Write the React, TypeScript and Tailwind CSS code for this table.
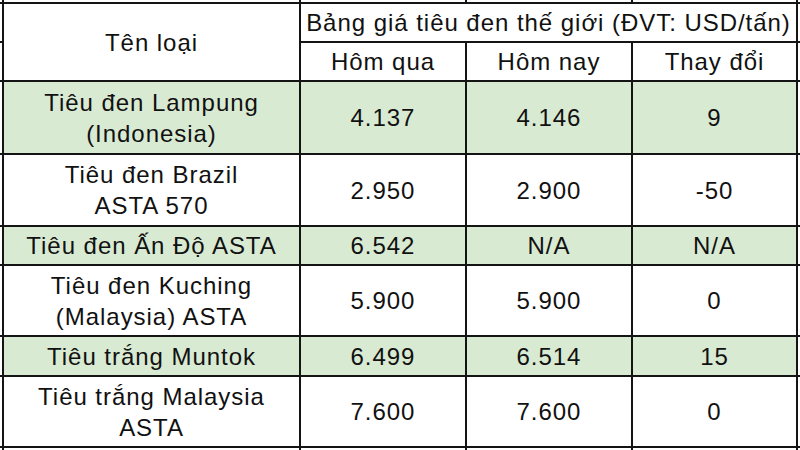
const rows = [
  { name: ['Tiêu đen Lampung', '(Indonesia)'], prev: '4.137', today: '4.146', diff: '9', green: true },
  { name: ['Tiêu đen Brazil', 'ASTA 570'], prev: '2.950', today: '2.900', diff: '-50', green: false },
  { name: ['Tiêu đen Ấn Độ ASTA'], prev: '6.542', today: 'N/A', diff: 'N/A', green: true },
  { name: ['Tiêu đen Kuching', '(Malaysia) ASTA'], prev: '5.900', today: '5.900', diff: '0', green: false },
  { name: ['Tiêu trắng Muntok'], prev: '6.499', today: '6.514', diff: '15', green: true },
  { name: ['Tiêu trắng Malaysia', 'ASTA'], prev: '7.600', today: '7.600', diff: '0', green: false },
]

function Cell({ children, green, className = '' }: { children?: React.ReactNode; green?: boolean; className?: string }) {
  return (
    <div className={`flex flex-col items-center justify-center text-center ${green ? 'bg-[#d9ead3]' : 'bg-white'} ${className}`}>
      {children}
    </div>
  )
}

export default function App() {
  return (
    <div className="w-[800px] h-[450px] overflow-hidden bg-white">
      <div
        className="grid w-[800px] h-[450px] gap-[2px] bg-[#141414] grid-cols-[2px_295px_164px_164px_163px_2px] grid-rows-[2px_37px_37px_71px_70px_37px_69px_38px_69px_2px] text-[24px] leading-[31px] tracking-[0.04em] text-[#111]"
        style={{ fontFamily: '"Liberation Sans", Arial, sans-serif' }}
      >
        {/* cut-off row above */}
        <Cell /><Cell /><Cell /><Cell /><Cell /><Cell />

        {/* header */}
        <Cell />
        <Cell className="row-span-2">Tên loại</Cell>
        <Cell className="col-span-3">Bảng giá tiêu đen thế giới (ĐVT: USD/tấn)</Cell>
        <Cell />
        <Cell />
        <Cell>Hôm qua</Cell>
        <Cell>Hôm nay</Cell>
        <Cell>Thay đổi</Cell>
        <Cell />

        {rows.map((r, i) => (
          <div key={i} className="contents">
            <Cell />
            <Cell green={r.green}>
              {r.name.map(line => <span key={line}>{line}</span>)}
            </Cell>
            <Cell green={r.green}>{r.prev}</Cell>
            <Cell green={r.green}>{r.today}</Cell>
            <Cell green={r.green}>{r.diff}</Cell>
            <Cell />
          </div>
        ))}

        {/* cut-off row below */}
        <Cell /><Cell /><Cell /><Cell /><Cell /><Cell />
      </div>
    </div>
  )
}
